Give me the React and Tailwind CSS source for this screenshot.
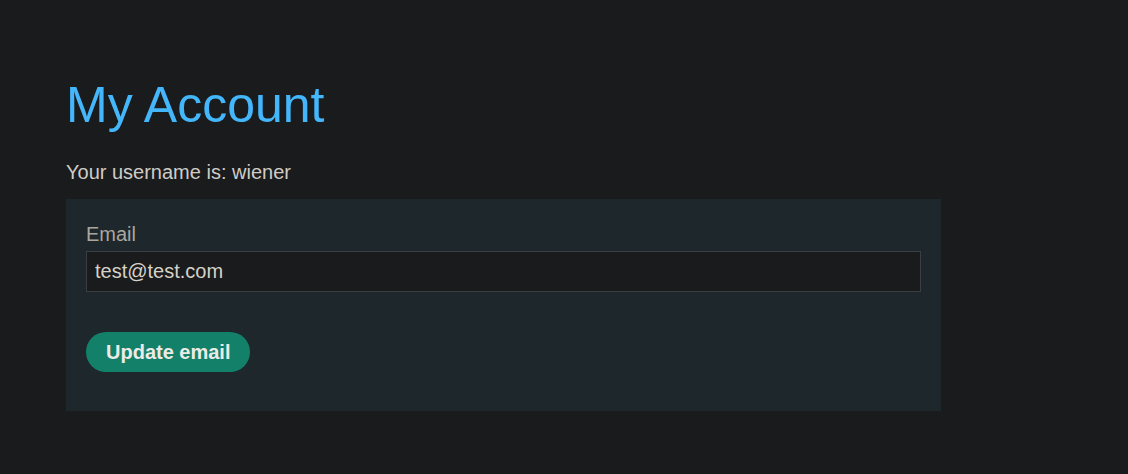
export default function App() {
  return (
    <div
      className="min-h-screen bg-[#1a1b1d] pl-[66px] pt-[77px]"
      style={{ fontFamily: '"Liberation Sans", Arial, sans-serif' }}
    >
      <div className="w-[875px]">
        <h1 className="text-[50px] leading-[56px] text-[#44b6fb]">My Account</h1>
        <p className="mt-[27px] text-[20px] leading-[24px] text-[#cfccc6]">Your username is: wiener</p>
        <form
          className="mt-[15px] bg-[#1e272c] px-5 pt-[23px] pb-[39px]"
          onSubmit={e => e.preventDefault()}
        >
          <label className="block text-[20px] leading-[24px] text-[#aba69d]">Email</label>
          <input
            type="email"
            defaultValue="test@test.com"
            className="mt-[5px] block h-[41px] w-full border border-[#3b3f42] bg-[#1a1b1d] px-[8px] text-[20px] text-[#d6d2c8] outline-none"
          />
          <button
            type="submit"
            className="mt-10 h-10 rounded-full bg-[#13806a] px-5 text-[20px] font-bold text-[#ecebe6]"
          >
            Update email
          </button>
        </form>
      </div>
    </div>
  );
}
